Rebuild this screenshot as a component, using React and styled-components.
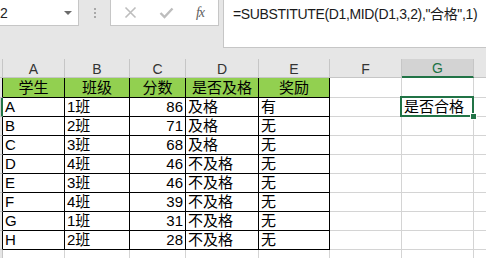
import React from 'react';
import styled, { createGlobalStyle, css } from 'styled-components';

const GlobalStyle = createGlobalStyle`
  html, body {
    margin: 0;
    padding: 0;
    background: #ffffff;
    overflow: hidden;
  }
  body {
    font-family: "Liberation Sans", "Noto Sans CJK SC", sans-serif;
  }
`;

const FONT = `"Liberation Sans", "Noto Sans CJK SC", sans-serif`;
const GRID = '#d4d4d4';
const HEAD_LINE = '#c6c6c6';
const ACCENT = '#217346';

// widths of the visible columns (row header strip, A..H)
const COLS = [3, 62, 65, 56, 73, 71, 72, 72, 72];
const LETTERS = ['A', 'B', 'C', 'D', 'E', 'F', 'G', 'H'];

const header = ['学生', '班级', '分数', '是否及格', '奖励'];
const rows = [
  ['A', '1班', 86, '及格', '有'],
  ['B', '2班', 71, '及格', '无'],
  ['C', '3班', 68, '及格', '无'],
  ['D', '4班', 46, '不及格', '无'],
  ['E', '3班', 46, '不及格', '无'],
  ['F', '4班', 39, '不及格', '无'],
  ['G', '1班', 31, '不及格', '无'],
  ['H', '2班', 28, '不及格', '无'],
];

const Window = styled.div`
  width: 486px;
  height: 258px;
  overflow: hidden;
  background: #e6e6e6;
`;

const TopBar = styled.div`
  display: flex;
  align-items: flex-start;
  height: 59px;
`;

const NameBox = styled.div`
  box-sizing: border-box;
  margin-left: -14px;
  width: 93px;
  height: 26px;
  background: #fff;
  border-right: 1px solid ${HEAD_LINE};
  border-bottom: 1px solid ${HEAD_LINE};
  display: flex;
  align-items: center;
  justify-content: space-between;
  padding: 0 6px 0 3px;
  font-family: ${FONT};
  font-size: 14px;
  color: #222;
`;

const Caret = styled.span`
  width: 0;
  height: 0;
  border-left: 4px solid transparent;
  border-right: 4px solid transparent;
  border-top: 4px solid #6b6b6b;
`;

const Grip = styled.div`
  width: 31px;
  height: 26px;
  display: flex;
  flex-direction: column;
  align-items: center;
  justify-content: center;
  gap: 2px;
`;

const Dot = styled.span`
  width: 2px;
  height: 2px;
  background: #a8a8a8;
`;

const FxBox = styled.div`
  box-sizing: border-box;
  width: 109px;
  height: 26px;
  background: #fff;
  border-left: 1px solid ${HEAD_LINE};
  border-right: 1px solid ${HEAD_LINE};
  border-bottom: 1px solid ${HEAD_LINE};
  display: flex;
  align-items: center;
  justify-content: space-around;
  padding: 0 3px 0 2px;
`;

const FxLabel = styled.span`
  font-family: "Liberation Serif", serif;
  font-style: italic;
  font-size: 14px;
  color: #5e5e5e;
  letter-spacing: -1px;
`;

const FormulaBox = styled.div`
  box-sizing: border-box;
  flex: 1;
  margin-left: 4px;
  height: 48px;
  background: #fff;
  border-left: 1px solid ${HEAD_LINE};
  border-bottom: 1px solid ${HEAD_LINE};
  padding: 4px 0 0 9px;
  font-family: ${FONT};
  font-size: 14px;
  letter-spacing: -0.35px;
  line-height: 20px;
  color: #1a1a1a;
  white-space: nowrap;
  overflow: hidden;
`;

const Sheet = styled.div`
  display: grid;
  grid-template-columns: ${COLS.map((w) => w + 'px').join(' ')};
  grid-template-rows: 19px 20px repeat(9, 19px);
  background: #fff;
`;

const ColHead = styled.div`
  box-sizing: border-box;
  background: ${(p) => (p.$active ? '#d3d3d3' : '#e6e6e6')};
  border-right: 1px solid ${HEAD_LINE};
  border-bottom: ${(p) => (p.$active ? `2px solid ${ACCENT}` : `1px solid ${HEAD_LINE}`)};
  color: ${(p) => (p.$active ? ACCENT : '#333')};
  font-family: ${FONT};
  font-size: 14px;
  display: flex;
  align-items: center;
  justify-content: center;
  padding-top: 1px;
`;

const RowHead = styled.div`
  box-sizing: border-box;
  background: ${(p) => (p.$active ? '#d3d3d3' : '#e6e6e6')};
  border-bottom: 1px solid ${HEAD_LINE};
  border-right: ${(p) => (p.$active ? `2px solid ${ACCENT}` : `1px solid ${p.$boxed ? '#000' : HEAD_LINE}`)};
`;

const Cell = styled.div`
  box-sizing: border-box;
  position: relative;
  display: flex;
  align-items: flex-end;
  justify-content: ${(p) => p.$align || 'flex-start'};
  padding: 0 2px 0 2px;
  font-family: ${FONT};
  font-size: 15px;
  line-height: 18px;
  color: #000;
  white-space: nowrap;
  background: ${(p) => (p.$head ? '#92d050' : '#fff')};
  border-right: 1px solid ${GRID};
  border-bottom: 1px solid ${GRID};
  ${(p) =>
    p.$boxed &&
    css`
      border-right-color: #000;
      border-bottom-color: #000;
    `}
  ${(p) =>
    p.$selected &&
    css`
      &::after {
        content: '';
        position: absolute;
        inset: -2px -1px -1px -2px;
        border: 2px solid ${ACCENT};
        pointer-events: none;
      }
    `}
`;

const FillHandle = styled.span`
  position: absolute;
  right: -4px;
  bottom: -4px;
  width: 5px;
  height: 5px;
  background: ${ACCENT};
  border: 1px solid #fff;
  z-index: 2;
`;

const CloseIcon = () => (
  <svg width="13" height="13" viewBox="0 0 13 13">
    <path d="M1.5 1.5 L11.5 11.5 M11.5 1.5 L1.5 11.5" stroke="#bdbdbd" strokeWidth="1.6" fill="none" />
  </svg>
);

const CheckIcon = () => (
  <svg width="15" height="12" viewBox="0 0 15 12">
    <path d="M1.5 6 L5.5 10 L13.5 1.5" stroke="#bdbdbd" strokeWidth="2.4" fill="none" />
  </svg>
);

const alignFor = (col) => (col === 2 ? 'flex-end' : 'flex-start');

const App = () => {
  const sheetRows = [];

  // row 1: green header
  sheetRows.push(
    <React.Fragment key="r1">
      <RowHead $boxed />
      {header.map((h) => (
        <Cell key={h} $head $boxed $align="center">
          {h}
        </Cell>
      ))}
      <Cell />
      <Cell />
      <Cell />
    </React.Fragment>
  );

  rows.forEach((r, i) => {
    sheetRows.push(
      <React.Fragment key={'r' + (i + 2)}>
        <RowHead $boxed $active={i === 0} />
        {r.map((v, c) => (
          <Cell key={c} $boxed $align={alignFor(c)}>
            {v}
          </Cell>
        ))}
        <Cell />
        {i === 0 ? (
          <Cell $selected>
            是否合格
            <FillHandle />
          </Cell>
        ) : (
          <Cell />
        )}
        <Cell />
      </React.Fragment>
    );
  });

  // partial row 10
  sheetRows.push(
    <React.Fragment key="r10">
      <RowHead />
      {LETTERS.map((l) => (
        <Cell key={l} />
      ))}
    </React.Fragment>
  );

  return (
    <>
      <GlobalStyle />
      <Window>
        <TopBar>
          <NameBox>
            <span>G2</span>
            <Caret />
          </NameBox>
          <Grip>
            <Dot />
            <Dot />
            <Dot />
          </Grip>
          <FxBox>
            <CloseIcon />
            <CheckIcon />
            <FxLabel>fx</FxLabel>
          </FxBox>
          <FormulaBox>=SUBSTITUTE(D1,MID(D1,3,2),"合格",1)</FormulaBox>
        </TopBar>
        <Sheet>
          <ColHead />
          {LETTERS.map((l) => (
            <ColHead key={l} $active={l === 'G'}>
              {l}
            </ColHead>
          ))}
          {sheetRows}
        </Sheet>
      </Window>
    </>
  );
};

export default App;
